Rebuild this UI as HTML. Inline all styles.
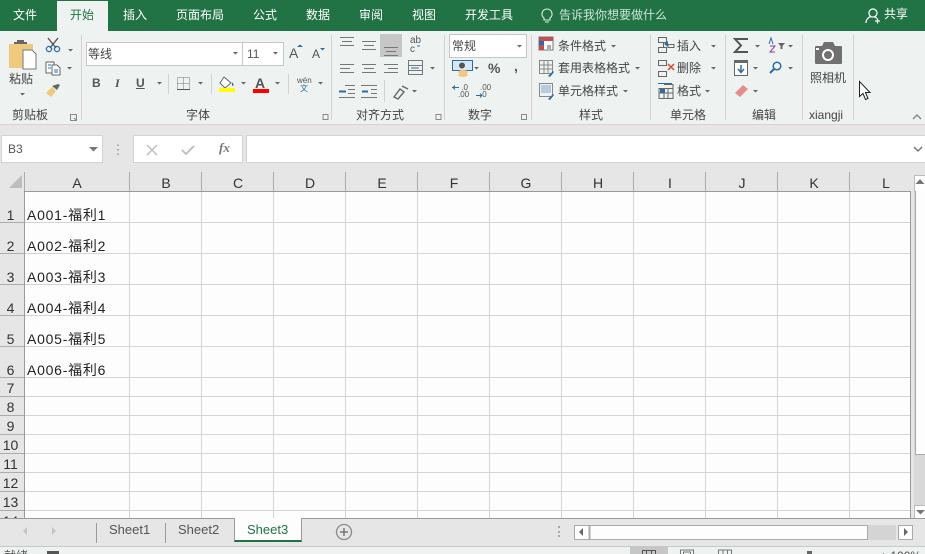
<!DOCTYPE html>
<html><head><meta charset="utf-8"><style>
html,body{margin:0;padding:0;width:925px;height:554px;overflow:hidden;background:#e6e6e6}
#p{position:relative;width:925px;height:554px;overflow:hidden;font-family:"Liberation Sans","Noto Sans CJK SC",sans-serif}
#p div{position:absolute}
.t{font-size:12px;line-height:16px;white-space:nowrap;color:#444}
.w{color:#fff}
.g{font-size:12px;line-height:16px;color:#555;white-space:nowrap}
.ch{top:175px;font-size:14px;line-height:17px;color:#333;text-align:center;width:72px}
.rh{left:0;width:21px;text-align:center;font-size:14px;line-height:16px;color:#333}
.c{left:27px;font-size:14px;line-height:18px;color:#222;white-space:nowrap;letter-spacing:.75px}
.sep{width:1px;background:#d9cfd3;top:35px;height:85px}
svg{position:absolute;left:0;top:0}
</style></head><body><div id="p">
<div style="left:0;top:0;width:925px;height:31px;background:#217346"></div>
<div style="left:57px;top:1px;width:51px;height:31px;background:#eef3f1"></div>
<div style="left:0;top:31px;width:925px;height:93px;background:#eef3f1"></div>
<div style="left:0;top:124px;width:925px;height:1px;background:#e6ccd2"></div>

<div class="t w" style="left:13px;top:7px">文件</div>
<div class="t" style="left:70px;top:7px;color:#217346">开始</div>
<div class="t w" style="left:123px;top:7px">插入</div>
<div class="t w" style="left:176px;top:7px">页面布局</div>
<div class="t w" style="left:253px;top:7px">公式</div>
<div class="t w" style="left:306px;top:7px">数据</div>
<div class="t w" style="left:359px;top:7px">审阅</div>
<div class="t w" style="left:412px;top:7px">视图</div>
<div class="t w" style="left:465px;top:7px">开发工具</div>
<div class="t" style="left:559px;top:7px;color:#cfe3d8">告诉我你想要做什么</div>
<div class="t w" style="left:884px;top:6px">共享</div>

<div class="sep" style="left:81px"></div><div class="sep" style="left:331px"></div><div class="sep" style="left:444px"></div>
<div class="sep" style="left:531px"></div><div class="sep" style="left:650px"></div><div class="sep" style="left:725px"></div>
<div class="sep" style="left:802px"></div><div class="sep" style="left:853px"></div>

<div style="left:86px;top:42px;width:155px;height:22px;background:#fff;border:1px solid #c6c6c6"></div>
<div style="left:242px;top:42px;width:40px;height:22px;background:#fff;border:1px solid #c6c6c6"></div>
<div style="left:449px;top:34px;width:76px;height:22px;background:#fff;border:1px solid #c6c6c6"></div>
<div style="left:380px;top:34px;width:22px;height:23px;background:#c6c6c6"></div>

<div class="t" style="left:88px;top:46px">等线</div>
<div class="t" style="left:247px;top:46px;color:#555">11</div>
<div class="t" style="left:452px;top:38px">常规</div>
<div class="t" style="left:9px;top:71px">粘贴</div>
<div class="t" style="left:558px;top:38px">条件格式</div>
<div class="t" style="left:558px;top:60px">套用表格格式</div>
<div class="t" style="left:558px;top:83px">单元格样式</div>
<div class="t" style="left:677px;top:38px">插入</div>
<div class="t" style="left:677px;top:60px">删除</div>
<div class="t" style="left:677px;top:83px">格式</div>
<div class="t" style="left:810px;top:70px">照相机</div>
<div class="t" style="left:12px;top:107px">剪贴板</div>
<div class="t" style="left:186px;top:107px">字体</div>
<div class="t" style="left:356px;top:107px">对齐方式</div>
<div class="t" style="left:468px;top:107px">数字</div>
<div class="t" style="left:579px;top:107px">样式</div>
<div class="t" style="left:670px;top:107px">单元格</div>
<div class="t" style="left:752px;top:107px">编辑</div>
<div class="t" style="left:809px;top:107px">xiangji</div>

<div style="left:92px;top:75px;font:bold 12px/16px 'Liberation Sans';color:#555">B</div>
<div style="left:115px;top:75px;font:italic bold 12px/16px 'Liberation Serif';color:#555">I</div>
<div style="left:136px;top:75px;font:bold 12px/16px 'Liberation Sans';color:#555;text-decoration:underline">U</div>
<div style="left:255px;top:75px;font:bold 14px/16px 'Liberation Sans';color:#555">A</div>
<div style="left:289px;top:45px;font:14px/16px 'Liberation Sans';color:#555">A</div>
<div style="left:312px;top:47px;font:12px/14px 'Liberation Sans';color:#555">A</div>
<div style="left:297px;top:76px;font:8px/9px 'Liberation Sans','Noto Sans CJK SC';color:#555">wén</div>
<div style="left:300px;top:84px;font:8px/10px 'Noto Sans CJK SC';color:#2b6ca8">文</div>
<div style="left:410px;top:36px;font:10px/9px 'Liberation Sans';color:#555;width:14px">ab<br>c</div>
<div style="left:488px;top:60px;font:bold 14px/16px 'Liberation Sans';color:#555">%</div>
<div style="left:514px;top:58px;font:bold 14px/16px 'Liberation Sans';color:#555">,</div>
<div style="left:458px;top:84px;font:8px/7px 'Liberation Sans';color:#555;text-align:right;width:10px">.0<br>.00</div>
<div style="left:480px;top:84px;font:8px/7px 'Liberation Sans';color:#555;width:14px">.00<br>.0</div>

<svg width="925" height="130" fill="none">
<g fill="#666">
<path d="M20 93h5l-2.500 2.500zM68 49h5l-2.500 2.500zM67 67h5l-2.500 2.500zM157 82h5l-2.500 2.500zM198 82h5l-2.500 2.500zM241 82h5l-2.500 2.500zM275 82h5l-2.500 2.500zM318 82h5l-2.500 2.500zM233 52h5l-2.500 2.500zM273 52h5l-2.500 2.500zM430 67h5l-2.500 2.500zM412 90h5l-2.500 2.500zM517 45h5l-2.500 2.500zM474 67h5l-2.500 2.500zM611 45h5l-2.500 2.500zM635 67h5l-2.500 2.500zM623 90h5l-2.500 2.500zM711 45h5l-2.500 2.500zM711 67h5l-2.500 2.500zM705 90h5l-2.500 2.500zM755 45h5l-2.500 2.500zM788 45h5l-2.500 2.500zM753 67h5l-2.500 2.500zM788 67h5l-2.500 2.500zM753 90h5l-2.500 2.500z"/>
</g>
<path d="M547 9a5 5 0 0 1 3 9v2h-6v-2a5 5 0 0 1 3-9zM545 22h4" stroke="#dfece5" stroke-width="1.100"/>
<path d="M873 9a4 4 0 1 1-.1 0zM866 23c0-4 3-6 5-6.500M874 16.500c1 .3 2 1 3 2M875 21h5M877.500 18.500v5" stroke="#fff" stroke-width="1.200"/>
<rect x="9" y="44" width="24" height="24" fill="#f0c981"/>
<path d="M14 44h13v-2h-3v-2h-7v2h-3z" fill="#666"/>
<path d="M23 50h9l4 4v15H23z" fill="#fff" stroke="#777"/>
<path d="M48 38l8 10M58 38l-8 10" stroke="#555" stroke-width="1.400"/>
<circle cx="49" cy="49" r="2.600" stroke="#2b6ca8" stroke-width="1.300"/><circle cx="57" cy="49" r="2.600" stroke="#2b6ca8" stroke-width="1.300"/>
<path d="M46 62h8v11h-8z" fill="#fff" stroke="#666"/><path d="M52 65h5l3 3v7h-8z" fill="#fff" stroke="#666"/><path d="M48 65h3M48 68h3M54 70h4M54 72h4" stroke="#2b6ca8"/>
<path d="M46 93l6-6 4 4-5 6z" fill="#f0c981"/><path d="M52 86l6-2 2 1-3 5z" fill="#666"/>
<g stroke="#888"><path d="M70.500 114.500h6v6h-6zM74 118l2 2M323 114.500h5v5h-5zM436 114.500h5v5h-5zM521.500 114.500h5v5h-5z"/></g>
<path d="M297 47l3-2.500 3 2.500" fill="#2b6ca8"/><path d="M320 48l2.500 2.500 2.500-2.500z" fill="#2b6ca8"/>
<path d="M177.500 77.500h12v12h-12zM183.500 77.500v12M177.500 83.500h12" stroke="#777" stroke-dasharray="1 1"/><path d="M177 89.500h13" stroke="#555"/>
<path d="M168.500 74v20M211.500 74v20M288.500 74v20M384.500 80v22" stroke="#d9cfd3"/>
<path d="M224 77l-4 6 5 5 6-5z" fill="#fff" stroke="#666"/><path d="M232 82l2 3-2 1z" fill="#2b6ca8"/>
<rect x="219" y="88" width="16" height="4" fill="#ff0"/><rect x="253" y="89" width="16" height="4" fill="#f00"/>
<g stroke="#777"><path d="M340 37.500h14M342 41.500h10M340 45.500h14M362 41.500h14M364 45.500h10M362 49.500h14M384 47.500h14M386 51.500h10M384 55.500h14"/>
<path d="M340 64.500h14M340 68.500h10M340 72.500h14M362 64.500h14M364 68.500h10M362 72.500h14M384 64.500h14M388 68.500h10M384 72.500h14"/>
<path d="M345 85.500h10M348 89.500h7M348 93.500h7M339 97.500h16M361 85.500h16M371 89.500h6M371 93.500h6M361 97.500h16"/>
<path d="M408.500 60.500h14v14h-14zM408.500 65.500h14M408.500 70.500h14" /></g>
<path d="M411 68h8" stroke="#2b6ca8"/><path d="M339 91.500h7M362 91.500h6" stroke="#2b6ca8" stroke-width="2"/>
<path d="M394 97l6-8 4 3-6 7zM402 86l6 3" stroke="#666" stroke-width="1.400"/>
<path d="M420 46h-3" stroke="#2b6ca8"/>
<rect x="452.500" y="60.500" width="20" height="10" fill="#d8e8f2" stroke="#2b6ca8"/><circle cx="462" cy="65.500" r="3" fill="#555"/><ellipse cx="463" cy="72" rx="5" ry="2" fill="#f0c981"/><ellipse cx="463" cy="75" rx="5" ry="2" fill="#f0c981"/>
<path d="M452 87.500h7M476 95.500h6M453 87.500l2-2M453 87.500l2 2M482 95.500l-2-2M482 95.500l-2 2" stroke="#2b6ca8"/>
<rect x="539" y="37" width="14" height="13" fill="#fff" stroke="#777"/><rect x="539" y="37" width="14" height="4" fill="#c0504d"/><rect x="539" y="41" width="5" height="4" fill="#2b6ca8"/><rect x="539" y="45" width="5" height="5" fill="#c0504d"/><path d="M547 46h4M547 48h4" stroke="#555"/>
<g stroke="#888"><path d="M539.500 60.500h13v13h-13zM539.500 65h13M539.500 69h13M544 60v13M548 60v13M539.500 83.500h13v13h-13z"/></g>
<rect x="541" y="85" width="10" height="8" fill="#b5cbe0"/><path d="M548 76l5-5 1 1-4 5zM548 99l5-5 1 1-4 5z" fill="#2b6ca8"/>
<g stroke="#666"><path d="M658.500 37.500h8v5h-8zM658.500 47.500h8v5h-8zM658.500 42.500h5v5M668 44.500h6v3h-6zM658.500 60.500h8v5h-8zM658.500 71.500h8v5h-8zM664 84.500h9v14h-14v-10h14M664 88v10M668 88v10M659 93h14"/></g>
<path d="M668 41l-4 3 4 3z" fill="#2b6ca8"/><path d="M668 64l6 6M674 64l-6 6" stroke="#d9482b" stroke-width="1.500"/><rect x="660" y="89" width="5" height="4" fill="#2b6ca8"/><path d="M658 83.500h14" stroke="#2b6ca8"/>
<path d="M748 39h-13l6 6.500-6 6.500h13" stroke="#555" stroke-width="2"/>
<rect x="734.500" y="60.500" width="13" height="15" fill="#fff" stroke="#666"/><path d="M734 60h14v3h-14z" fill="#666"/><path d="M741 65v7M738 69l3 3.500 3-3.500" stroke="#2b6ca8" stroke-width="1.500"/>
<path d="M735 93l8-8 5 4-8 8z" fill="#e88b8b"/>
<path d="M769 44l2-6 2 6" stroke="#2b6ca8"/><path d="M770 46h5l-5 6h5" stroke="#8a3fa0"/><path d="M778 43h7l-2.500 3v3h-2v-3z" fill="#666"/>
<circle cx="777" cy="66" r="3.800" stroke="#2b6ca8" stroke-width="1.500"/><path d="M774 69l-4 4" stroke="#2b6ca8" stroke-width="2"/>
<path d="M816 46h6l2-4h9l2 4h6q1 0 1 1v16q0 1-1 1h-25q-1 0-1-1V47q0-1 1-1z" fill="#707070"/><circle cx="828" cy="55" r="6" fill="#fff"/><circle cx="828" cy="55" r="4" fill="#707070"/><rect x="816" y="48" width="3" height="2" fill="#fff"/>
<path d="M859.500 81.500v15l3.500-3 2.500 6 2.500-1-2.500-6h4.500z" fill="#fff" stroke="#222"/>
<path d="M913 119l4-4 4 4" stroke="#888" stroke-width="1.500"/>
</svg>

<div style="left:1px;top:135px;width:100px;height:26px;background:#fff;border:1px solid #d4d4d4"></div>
<div class="g" style="left:8px;top:141px">B3</div>
<div style="left:133px;top:135px;width:108px;height:26px;background:#fff;border:1px solid #d4d4d4"></div>
<div style="left:246px;top:135px;width:685px;height:26px;background:#fff;border:1px solid #d4d4d4"></div>
<div style="left:219px;top:141px;font:italic bold 13px/14px 'Liberation Serif';color:#777">fx</div>
<svg width="925" height="192" fill="none" style="pointer-events:none">
<path d="M89 147h9l-4.500 4.500z" fill="#777"/>
<path d="M118 144.500v1.500M118 149v1.500M118 153.500v1.500" stroke="#aaa" stroke-width="2"/>
<path d="M147 145l10 10M157 145l-10 10" stroke="#bbb" stroke-width="1.400"/>
<path d="M182 150l4 4 8-8" stroke="#bbb" stroke-width="1.800"/>
<path d="M914 147l4 4 4-4" stroke="#777" stroke-width="1.500"/>
<path d="M22 175v13H9z" fill="#bdbdbd"/>
<path d="M24.500 172v19M129.500 172v19M201.500 172v19M273.500 172v19M345.500 172v19M417.500 172v19M489.500 172v19M561.500 172v19M633.500 172v19M705.500 172v19M777.500 172v19M849.500 172v19" stroke="#acacac"/>
</svg>
<div class="ch" style="left:25px;width:104px">A</div><div class="ch" style="left:130px">B</div><div class="ch" style="left:202px">C</div><div class="ch" style="left:274px">D</div><div class="ch" style="left:346px">E</div><div class="ch" style="left:418px">F</div><div class="ch" style="left:490px">G</div><div class="ch" style="left:562px">H</div><div class="ch" style="left:634px">I</div><div class="ch" style="left:706px">J</div><div class="ch" style="left:778px">K</div><div class="ch" style="left:850px;width:72px">L</div>

<div style="left:25px;top:191px;width:886px;height:327px;background:#fdfdfd"></div>
<svg width="925" height="520" fill="none" style="top:0">
<path d="M25 222.500h886M25 253.500h886M25 284.500h886M25 315.500h886M25 346.500h886M25 377.500h886M25 396.500h886M25 415.500h886M25 434.500h886M25 453.500h886M25 472.500h886M25 491.500h886M25 510.500h886M129.500 191v327M201.500 191v327M273.500 191v327M345.500 191v327M417.500 191v327M489.500 191v327M561.500 191v327M633.500 191v327M705.500 191v327M777.500 191v327M849.500 191v327" stroke="#d4d4d4"/>
<path d="M0 222.500h25M0 253.500h25M0 284.500h25M0 315.500h25M0 346.500h25M0 377.500h25M0 396.500h25M0 415.500h25M0 434.500h25M0 453.500h25M0 472.500h25M0 491.500h25M0 510.500h25" stroke="#acacac"/>
<path d="M24.500 191v327M25 191.500h886M910.500 191v327" stroke="#9a9a9a"/>
</svg>
<div class="rh" style="top:207px">1</div><div class="rh" style="top:238px">2</div><div class="rh" style="top:269px">3</div><div class="rh" style="top:300px">4</div><div class="rh" style="top:331px">5</div><div class="rh" style="top:362px">6</div><div class="rh" style="top:380px">7</div><div class="rh" style="top:399px">8</div><div class="rh" style="top:418px">9</div><div class="rh" style="top:437px">10</div><div class="rh" style="top:456px">11</div><div class="rh" style="top:475px">12</div><div class="rh" style="top:494px">13</div>
<div style="left:0;top:513px;width:25px;height:5px;overflow:hidden"><div class="rh" style="top:0">14</div></div>
<div class="c" style="top:206px">A001-福利1</div><div class="c" style="top:237px">A002-福利2</div><div class="c" style="top:268px">A003-福利3</div><div class="c" style="top:299px">A004-福利4</div><div class="c" style="top:330px">A005-福利5</div><div class="c" style="top:361px">A006-福利6</div>

<div style="left:914px;top:191px;width:11px;height:327px;background:#d8d8d8"></div>
<div style="left:914px;top:175px;width:11px;height:15px;background:#fff;border:1px solid #bbb;border-right:0"></div>
<div style="left:915px;top:191px;width:10px;height:263px;background:#fdfdfd;border-left:1px solid #aaa;border-bottom:1px solid #aaa"></div>
<div style="left:914px;top:505px;width:11px;height:12px;background:#fff;border:1px solid #bbb;border-right:0"></div>

<div style="left:0;top:518px;width:925px;height:28px;background:#e6e6e6;border-top:1px solid #9a9a9a;box-sizing:border-box"></div>
<div style="left:0;top:546px;width:925px;height:1px;background:#c8c8c8"></div>
<div style="left:234px;top:518px;width:68px;height:24px;background:#fdfdfd;border-left:1px solid #9a9a9a;border-right:1px solid #9a9a9a;box-sizing:border-box;border-bottom:2px solid #217346"></div>
<div class="g" style="left:109px;top:522px;font-size:13px">Sheet1</div>
<div class="g" style="left:178px;top:522px;font-size:13px">Sheet2</div>
<div class="g" style="left:247px;top:522px;font-size:13px;color:#217346">Sheet3</div>
<div style="left:0;top:547px;width:925px;height:7px;background:#eef3f1;overflow:hidden"></div>
<div style="left:630px;top:547px;width:38px;height:7px;background:#c6c6c6"></div>
<div style="left:4px;top:548px;height:6px;width:30px;overflow:hidden"><div class="g" style="left:0;top:0">就绪</div></div>
<div style="left:880px;top:548px;height:6px;width:45px;overflow:hidden"><div class="g" style="left:0;top:0">+ 100%</div></div>
<div style="left:868px;top:525px;width:28px;height:15px;background:#d4d4d4"></div>
<div style="left:574px;top:525px;width:294px;height:15px;background:#fdfdfd;border:1px solid #aaa;box-sizing:border-box"></div>
<div style="left:898px;top:525px;width:15px;height:15px;background:#fdfdfd;border:1px solid #aaa;box-sizing:border-box"></div>
<svg width="925" height="554" fill="none" style="pointer-events:none">
<path d="M96.500 523v20M165.500 523v20" stroke="#9a9a9a"/>
<path d="M27 527v8l-4-4zM52 527v8l4-4z" fill="#c4c4c4"/>
<circle cx="344" cy="532" r="7.500" stroke="#8a8a8a" stroke-width="1.300" fill="none"/><path d="M340 532h8M344 528v8" stroke="#777" stroke-width="1.500"/>
<path d="M558 526h2v2h-2zM558 531h2v2h-2zM558 535h2v2h-2z" fill="#aaa"/>
<path d="M583 528v8l-4-4zM904 528v8l4-4z" fill="#666"/><path d="M589.500 525v15" stroke="#aaa" stroke-width="2"/>
<path d="M915.500 184l4.500-5 4.500 5z" fill="#777"/><path d="M916 510h9l-4.500 4.500z" fill="#777"/>
<path d="M642.500 550.500h13M646.500 550v4M651.500 550v4M642.500 550v4M655.500 550v4" stroke="#555"/>
<path d="M680.500 554v-4h13v4M683.500 554v-2h7v2" stroke="#777" fill="none"/>
<path d="M718.500 554v-4h13v4M723 550v4M727.500 550v4" stroke="#777" fill="none"/>
<rect x="807" y="551" width="5" height="3" fill="#666"/>
<path d="M47 551h12v3H47z" fill="#555"/>
</svg>
</div></body></html>
